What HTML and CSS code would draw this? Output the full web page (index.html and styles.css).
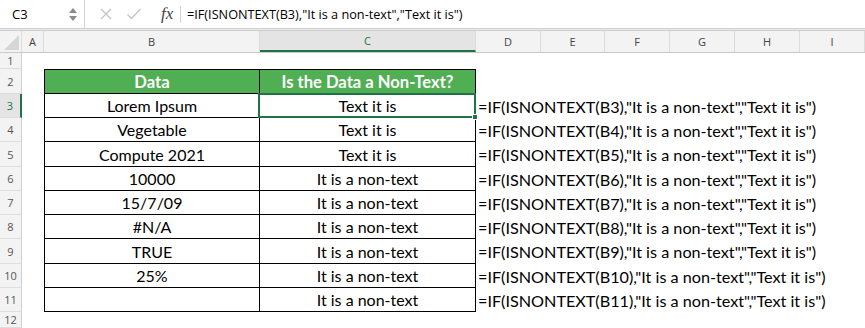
FILE: index.html
```html
<!DOCTYPE html>
<html lang="en">
<head>
  <meta charset="UTF-8">
  <title>ISNONTEXT example</title>
  <link rel="stylesheet" href="styles.css">
</head>
<body>
  <div class="formula-bar">
    <div class="name-box">
      <span class="name">C3</span>
      <span class="spin"><i class="up"></i><i class="down"></i></span>
    </div>
    <div class="fx-tools">
      <svg width="14" height="14" viewBox="0 0 14 14"><path d="M2 2 L12 12 M12 2 L2 12" stroke="#c4c4c4" stroke-width="1.3" fill="none"/></svg>
      <svg width="16" height="14" viewBox="0 0 16 14"><path d="M1.5 7.5 L5.5 11.5 L14.5 2" stroke="#c4c4c4" stroke-width="1.3" fill="none"/></svg>
      <span class="fx">fx</span>
    </div>
    <div class="formula">=IF(ISNONTEXT(B3),"It is a non-text","Text it is")</div>
  </div>
  <div class="gap"></div>

  <div class="col-heads">
    <div class="corner"><i></i></div>
    <div>A</div><div>B</div><div class="on">C</div><div>D</div>
    <div>E</div><div>F</div><div>G</div><div>H</div><div>I</div>
  </div>

  <div class="sheet">
    <div class="row r1"><div class="rh">1</div><div></div><div></div><div></div><div></div></div>
    <div class="row r-tall head"><div class="rh">2</div><div></div><div class="t b">Data</div><div class="t c">Is the Data a Non-Text?</div><div></div></div>
    <div class="row r-short"><div class="rh on">3</div><div></div><div class="t b">Lorem Ipsum</div><div class="t c sel">Text it is<span class="cursor"><i></i></span></div><div class="f">=IF(ISNONTEXT(B3),"It is a non-text","Text it is")</div></div>
    <div class="row r-short"><div class="rh">4</div><div></div><div class="t b">Vegetable</div><div class="t c">Text it is</div><div class="f">=IF(ISNONTEXT(B4),"It is a non-text","Text it is")</div></div>
    <div class="row r-tall"><div class="rh">5</div><div></div><div class="t b">Compute 2021</div><div class="t c">Text it is</div><div class="f">=IF(ISNONTEXT(B5),"It is a non-text","Text it is")</div></div>
    <div class="row r-short"><div class="rh">6</div><div></div><div class="t b">10000</div><div class="t c">It is a non-text</div><div class="f">=IF(ISNONTEXT(B6),"It is a non-text","Text it is")</div></div>
    <div class="row r-short"><div class="rh">7</div><div></div><div class="t b">15/7/09</div><div class="t c">It is a non-text</div><div class="f">=IF(ISNONTEXT(B7),"It is a non-text","Text it is")</div></div>
    <div class="row r-short"><div class="rh">8</div><div></div><div class="t b">#N/A</div><div class="t c">It is a non-text</div><div class="f">=IF(ISNONTEXT(B8),"It is a non-text","Text it is")</div></div>
    <div class="row r-tall"><div class="rh">9</div><div></div><div class="t b">TRUE</div><div class="t c">It is a non-text</div><div class="f">=IF(ISNONTEXT(B9),"It is a non-text","Text it is")</div></div>
    <div class="row r-short"><div class="rh">10</div><div></div><div class="t b">25%</div><div class="t c">It is a non-text</div><div class="f">=IF(ISNONTEXT(B10),"It is a non-text","Text it is")</div></div>
    <div class="row r-short"><div class="rh">11</div><div></div><div class="t b"></div><div class="t c">It is a non-text</div><div class="f">=IF(ISNONTEXT(B11),"It is a non-text","Text it is")</div></div>
    <div class="row r1"><div class="rh">12</div><div></div><div></div><div></div><div></div></div>
  </div>
</body>
</html>
```

FILE: styles.css
```css
* { box-sizing: border-box; }
body {
  margin: 0;
  width: 865px;
  height: 328px;
  overflow: hidden;
  background: #fff;
  font-family: Lato, 'Open Sans', sans-serif;
  color: #000;
}

/* formula bar */
.formula-bar {
  height: 29px;
  display: flex;
  align-items: center;
  border-bottom: 1px solid #cfcfcf;
  font-family: 'Open Sans', sans-serif;
}
.name-box {
  width: 85px;
  height: 100%;
  display: flex;
  align-items: center;
  justify-content: space-between;
  padding: 0 7px 0 12px;
  border-right: 1px solid #d4d4d4;
  font-size: 13px;
}
.spin {
  display: flex;
  flex-direction: column;
  gap: 3px;
}
.spin i {
  width: 0;
  height: 0;
  border-left: 4px solid transparent;
  border-right: 4px solid transparent;
}
.spin .up { border-bottom: 5px solid #8a8a8a; }
.spin .down { border-top: 5px solid #8a8a8a; }
.fx-tools {
  display: flex;
  align-items: center;
  gap: 13px;
  padding-left: 14px;
  width: 96px;
  height: 17px;
  border-right: 1px solid #d4d4d4;
}
.fx {
  font-family: 'Liberation Serif', serif;
  font-style: italic;
  font-size: 17px;
  color: #444;
  margin-left: 6px;
}
.formula {
  padding-left: 6px;
  font-size: 12.7px;
  white-space: nowrap;
}
.gap {
  height: 1px;
  background: #ececec;
}

/* column headings */
.col-heads {
  display: grid;
  grid-template-columns: 22px 22px 216px 216px 65px 64px 65px 65px 65px 65px;
  height: 23px;
  background: #f3f3f3;
  border-top: 1px solid #cdcdcd;
  border-bottom: 1px solid #c9c9c9;
  font-family: 'Open Sans', sans-serif;
  font-size: 11px;
  color: #444;
}
.col-heads div {
  display: flex;
  align-items: center;
  justify-content: center;
  border-right: 1px solid #dcdcdc;
}
.col-heads .on {
  background: #e4e4e4;
  color: #217346;
  border-bottom: 2px solid #217346;
}
.corner {
  position: relative;
}
.corner i {
  position: absolute;
  right: 2px;
  bottom: 2px;
  width: 0;
  height: 0;
  border-left: 15px solid transparent;
  border-bottom: 15px solid #d6d6d6;
}

/* sheet rows */
.row {
  display: grid;
  grid-template-columns: 22px 22px 216px 216px 389px;
}
.r1 { height: 16px; }
.r-tall { height: 25px; }
.r-short { height: 24px; }
.rh {
  display: flex;
  align-items: center;
  justify-content: center;
  background: #f3f3f3;
  border-right: 1px solid #cfcfcf;
  border-bottom: 1px solid #dedede;
  font-family: 'Open Sans', sans-serif;
  font-size: 11px;
  color: #555;
}
.rh.on {
  color: #217346;
  background: #e4e4e4;
  border-right: 2px solid #217346;
}
.t {
  display: flex;
  align-items: center;
  justify-content: center;
  font-size: 16px;
  border-right: 1px solid #000;
  border-bottom: 1px solid #000;
  white-space: nowrap;
}
.t.b { border-left: 1px solid #000; }
.head .t {
  border-top: 1px solid #000;
  background: #50ae53;
  color: #fff;
  font-weight: bold;
  font-size: 16.6px;
}
.f {
  display: flex;
  align-items: center;
  padding-left: 2px;
  font-size: 16.2px;
  white-space: nowrap;
}

/* selected cell */
.sel { position: relative; }
.cursor {
  position: absolute;
  left: -2px;
  top: -1px;
  right: -1px;
  bottom: -1px;
  border: 2px solid #217346;
}
.cursor i {
  position: absolute;
  right: -4px;
  bottom: -4px;
  width: 6px;
  height: 6px;
  background: #217346;
  border: 1px solid #fff;
}
```
